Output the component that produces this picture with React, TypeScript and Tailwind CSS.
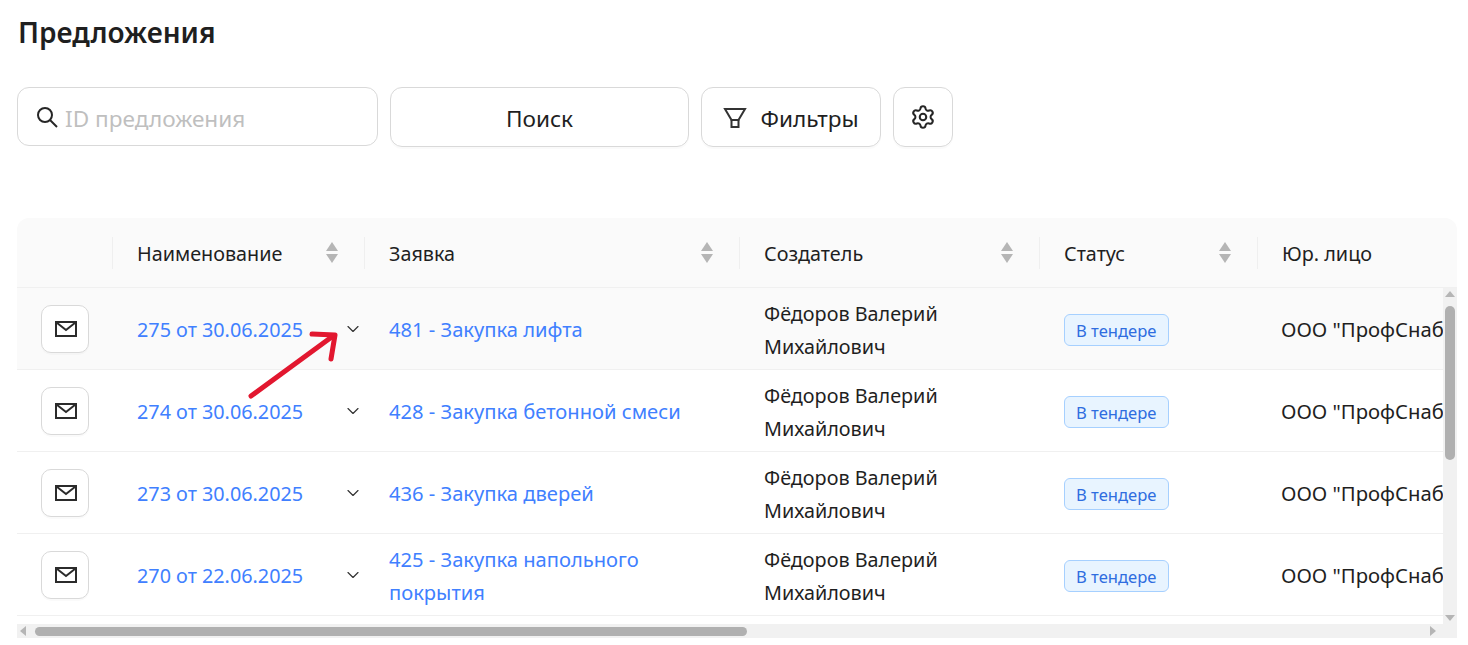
import { ChevronDown, Settings } from "lucide-react";

const rows = [
  { name: "275 от 30.06.2025", req: "481 - Закупка лифта", active: true },
  { name: "274 от 30.06.2025", req: "428 - Закупка бетонной смеси" },
  { name: "273 от 30.06.2025", req: "436 - Закупка дверей" },
  { name: "270 от 22.06.2025", req: "425 - Закупка напольного покрытия" },
];

function SearchIcon() {
  return (
    <svg width="24" height="24" viewBox="0 0 24 24" fill="none" stroke="#262626" strokeWidth="2">
      <circle cx="10" cy="10" r="7" />
      <path d="M15 15l7 7" />
    </svg>
  );
}

function FunnelIcon() {
  return (
    <svg width="24" height="24" viewBox="0 0 24 24" fill="none" stroke="#333" strokeWidth="2">
      <path d="M2 4h20l-6.5 11h-7z" />
      <path d="M8.5 15v7h7v-7" />
    </svg>
  );
}

function MailIcon() {
  return (
    <svg width="22" height="18" viewBox="0 0 22 18" fill="none" stroke="#2b2b2b" strokeWidth="2" className="ml-px">
      <rect x="1" y="2" width="20" height="14" />
      <path d="M1.5 2.5L11 10l9.5-7.5" />
    </svg>
  );
}

function SortIcon() {
  return (
    <svg width="12" height="21" viewBox="0 0 12 21" fill="#b5b5b5" className="shrink-0">
      <path d="M6 0l6 9H0z" />
      <path d="M0 12h12l-6 9z" />
    </svg>
  );
}

function HeadCell({ label, width, sort = true }: { label: string; width: string; sort?: boolean }) {
  return (
    <div className={`${width} relative flex shrink-0 items-center justify-between pl-6 pr-[27px]`}>
      <span className="absolute left-[-1px] top-[19px] h-8 w-px bg-[#efefef]" />
      <span className="pt-[2px]">{label}</span>
      {sort && <SortIcon />}
    </div>
  );
}

export default function App() {
  return (
    <div className="relative h-[645px] w-[1468px] overflow-hidden bg-white pl-[17px] font-['Noto_Sans',sans-serif] text-[#1f1f1f]">
      <h1 className="ml-px pt-[13px] text-[28px] leading-[38px] font-semibold">Предложения</h1>

      <div className="mt-9 flex gap-3 text-[22.6px]">
        <div className="flex h-[59px] w-[361px] items-center gap-[6px] rounded-xl border border-[#d9d9d9] pl-[17px]">
          <SearchIcon />
          <input
            placeholder="ID предложения"
            className="min-w-0 flex-1 bg-transparent pt-1 outline-none placeholder:text-[#bfbfbf]"
          />
        </div>
        <button className="h-[60px] w-[299px] rounded-xl border border-[#d9d9d9] pt-1 shadow-[0_2px_0_rgba(0,0,0,0.02)]">Поиск</button>
        <button className="flex h-[60px] w-[180px] items-center justify-center gap-[13px] rounded-xl border border-[#d9d9d9] shadow-[0_2px_0_rgba(0,0,0,0.02)]">
          <FunnelIcon />
          <span className="pt-1">Фильтры</span>
        </button>
        <button className="flex h-[60px] w-[60px] items-center justify-center rounded-xl border border-[#d9d9d9] shadow-[0_2px_0_rgba(0,0,0,0.02)]">
          <Settings size={26} strokeWidth={1.9} className="text-[#262626]" />
        </button>
      </div>

      <div className="mt-[71px] w-[1440px] text-[19.8px]">
        <div className="flex h-[70px] overflow-hidden rounded-t-xl border-b border-[#f0f0f0] bg-[#fafafa]">
          <div className="w-[96px] shrink-0" />
          <HeadCell label="Наименование" width="w-[252px]" />
          <HeadCell label="Заявка" width="w-[375px]" />
          <HeadCell label="Создатель" width="w-[300px]" />
          <HeadCell label="Статус" width="w-[218px]" />
          <HeadCell label="Юр. лицо" width="w-[199px]" sort={false} />
        </div>

        <div className="flex">
          <div className="w-[1426px] overflow-hidden">
            {rows.map((row) => (
              <div
                key={row.name}
                className={`flex h-[82px] w-[1440px] items-center border-b border-[#f0f0f0] leading-[33px] ${row.active ? "bg-[#fafafa]" : ""}`}
              >
                <div className="flex w-[96px] shrink-0 justify-center">
                  <button className="flex h-12 w-12 items-center justify-center rounded-[10px] border border-[#d9d9d9] bg-white shadow-[0_2px_0_rgba(0,0,0,0.02)]">
                    <MailIcon />
                  </button>
                </div>
                <div className="flex w-[252px] shrink-0 items-center justify-between pl-6 pr-[2px] text-[#4080ff]">
                  <span className="pt-[2px]">{row.name}</span>
                  <ChevronDown size={20} strokeWidth={1.4} className="mt-[1px] text-[#333]" />
                </div>
                <div className="w-[375px] shrink-0 px-6 pt-[2px] text-[20.15px] text-[#4080ff]">{row.req}</div>
                <div className="w-[300px] shrink-0 px-6 pt-[2px]">Фёдоров Валерий Михайлович</div>
                <div className="w-[218px] shrink-0 pl-6 pt-[2px]">
                  <span className="inline-flex h-8 items-center rounded-md border border-[#a6d0ff] bg-[#e8f4ff] pl-[11px] pr-3 pt-[2px] text-[16.6px] leading-none text-[#2f6de0]">
                    В тендере
                  </span>
                </div>
                <div className="shrink-0 whitespace-nowrap pl-[23px] pt-[2px] text-[20.3px]">ООО "ПрофСнаб</div>
              </div>
            ))}
            <div className="h-2" />
          </div>
          <div className="relative flex w-[14px] flex-col items-center bg-[#f1f1f1] pt-[18px]">
            <span className="absolute top-[3px] h-0 w-0 border-x-[5px] border-b-[6px] border-x-transparent border-b-[#b5b5b5]" />
            <div className="h-[154px] w-[10px] rounded-full bg-[#b0b0b0]" />
            <span className="absolute bottom-[3px] h-0 w-0 border-x-[5px] border-t-[6px] border-x-transparent border-t-[#b5b5b5]" />
          </div>
        </div>

        <div className="relative h-[14px] bg-[#f1f1f1] pl-[18px] pt-[3px]">
          <span className="absolute left-[3px] top-[2px] h-0 w-0 border-y-[5px] border-r-[6px] border-y-transparent border-r-[#b5b5b5]" />
          <div className="h-[9px] w-[712px] rounded-full bg-[#b0b0b0]" />
          <span className="absolute right-[21px] top-[2px] h-0 w-0 border-y-[5px] border-l-[6px] border-y-transparent border-l-[#b5b5b5]" />
        </div>
      </div>

      <svg className="absolute left-[244px] top-[328px]" width="98" height="76" viewBox="244 328 98 76" fill="none" stroke="#e2172f" strokeWidth="5" strokeLinecap="round" strokeLinejoin="round">
        <path d="M251 396L333 336" />
        <path d="M312 334L335 335L331 359" />
      </svg>
    </div>
  );
}
